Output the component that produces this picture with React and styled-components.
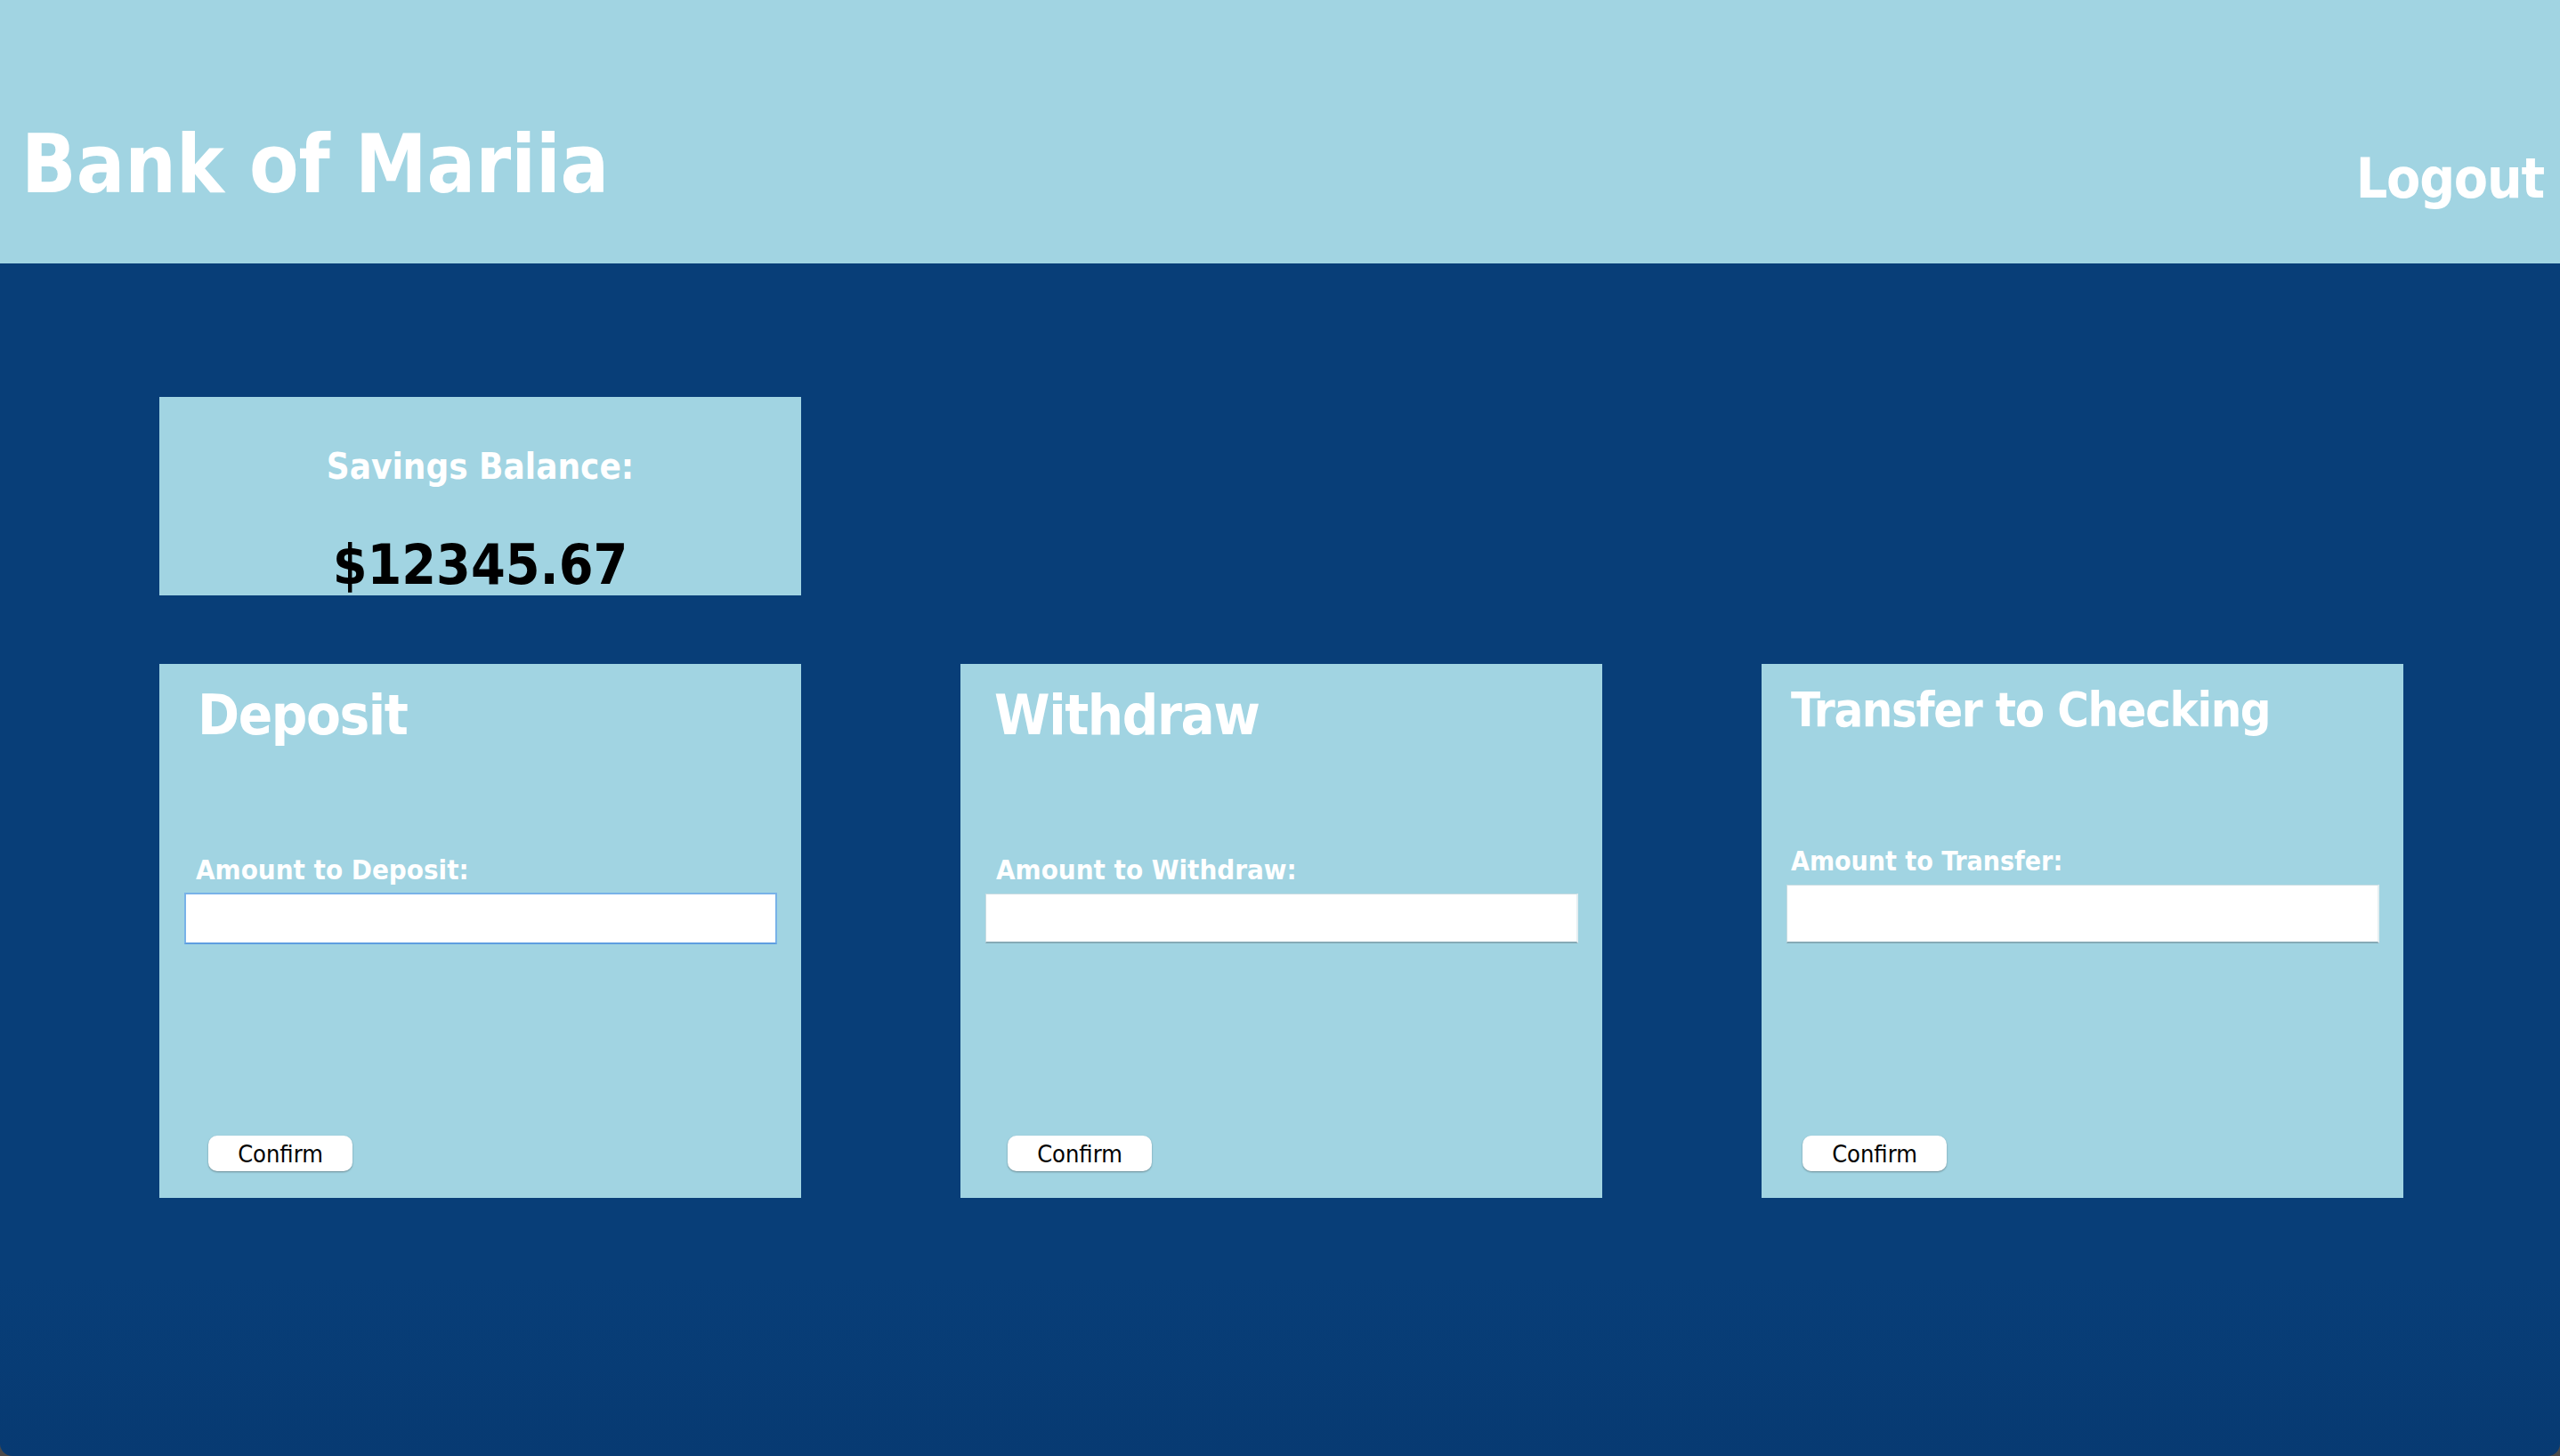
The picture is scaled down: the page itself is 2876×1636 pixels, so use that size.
import React from "react";
import styled, { createGlobalStyle } from "styled-components";

const GlobalStyle = createGlobalStyle`
  html, body {
    margin: 0;
    padding: 0;
    height: 100%;
    background: #4a4a4a;
  }
  #root {
    height: 100%;
  }
`;

const FONT = `"DejaVu Sans Condensed", "Liberation Sans", "DejaVu Sans", sans-serif`;

// the three action cards, each one drawn a little differently in the mockup
const cards = [
  {
    title: "Deposit",
    label: "Amount to Deposit:",
    titleSize: 63,
    titleLeft: 43,
    titleTop: 26,
    labelSize: 31,
    labelLeft: 41,
    labelGap: 127,
    inputGap: 10,
    inputH: 58,
    btnLeft: 55,
    focused: true,
  },
  {
    title: "Withdraw",
    label: "Amount to Withdraw:",
    titleSize: 63,
    titleLeft: 38,
    titleTop: 26,
    labelSize: 31,
    labelLeft: 40,
    labelGap: 127,
    inputGap: 11,
    inputH: 56,
    btnLeft: 53,
  },
  {
    title: "Transfer to Checking",
    label: "Amount to Transfer:",
    titleSize: 54,
    titleLeft: 33,
    titleTop: 25,
    labelSize: 30,
    labelLeft: 33,
    labelGap: 128,
    inputGap: 11,
    inputH: 66,
    btnLeft: 46,
  },
];

function App() {
  return (
    <>
      <GlobalStyle />
      <Page>
        <Header>
          <Brand>Bank of Mariia</Brand>
          <Logout>Logout</Logout>
        </Header>
        <Main>
          <BalanceCard>
            <BalanceLabel>Savings Balance:</BalanceLabel>
            <BalanceAmount>$12345.67</BalanceAmount>
          </BalanceCard>
          <CardRow>
            {cards.map((c) => (
              <ActionCard key={c.title} $top={c.titleTop}>
                <CardTitle $size={c.titleSize} $left={c.titleLeft}>
                  {c.title}
                </CardTitle>
                <AmountLabel
                  $size={c.labelSize}
                  $left={c.labelLeft}
                  $gap={c.labelGap}
                >
                  {c.label}
                </AmountLabel>
                <AmountInput
                  type="text"
                  $h={c.inputH}
                  $gap={c.inputGap}
                  $focused={c.focused}
                />
                <ConfirmButton $left={c.btnLeft}>Confirm</ConfirmButton>
              </ActionCard>
            ))}
          </CardRow>
        </Main>
      </Page>
    </>
  );
}

const Page = styled.div`
  display: flex;
  flex-direction: column;
  height: 100vh;
  width: 100vw;
  font-family: ${FONT};
`;

const Header = styled.div`
  display: flex;
  justify-content: space-between;
  align-items: flex-start;
  height: 296px;
  flex-shrink: 0;
  padding: 0 18px 0 24px;
  box-sizing: border-box;
  background-color: #a1d4e2;
`;

const Brand = styled.h1`
  margin: 140px 0 0 0;
  font-size: 90px;
  line-height: 1;
  font-weight: 700;
  color: #ffffff;
`;

const Logout = styled.span`
  margin-top: 170px;
  font-size: 62px;
  line-height: 1;
  letter-spacing: -1.2px;
  font-weight: 700;
  color: #ffffff;
  cursor: pointer;
`;

const Main = styled.div`
  flex: 1;
  display: flex;
  flex-direction: column;
  padding: 150px 0 0 179px;
  background: linear-gradient(to bottom, #083e78 0%, #083e78 85%, #073a72 100%);
  border-bottom-left-radius: 14px;
  border-bottom-right-radius: 14px;
`;

const BalanceCard = styled.div`
  display: flex;
  flex-direction: column;
  align-items: center;
  gap: 60px;
  width: 721px;
  height: 223px;
  padding-top: 58px;
  box-sizing: border-box;
  background-color: #a1d4e2;
`;

const BalanceLabel = styled.div`
  font-size: 40px;
  line-height: 1;
  font-weight: 700;
  color: #ffffff;
`;

const BalanceAmount = styled.div`
  font-size: 62px;
  line-height: 1;
  font-weight: 700;
  color: #000000;
`;

const CardRow = styled.div`
  display: flex;
  gap: 179px;
  margin-top: 77px;
`;

const ActionCard = styled.div`
  display: flex;
  flex-direction: column;
  width: 721px;
  height: 600px;
  padding: ${(p) => p.$top}px 27px 30px 28px;
  box-sizing: border-box;
  background-color: #a1d4e2;
`;

const CardTitle = styled.h2`
  margin: 0 0 0 ${(p) => p.$left - 28}px;
  font-size: ${(p) => p.$size}px;
  line-height: 1;
  letter-spacing: -1.4px;
  font-weight: 700;
  color: #ffffff;
  white-space: nowrap;
`;

const AmountLabel = styled.label`
  margin: ${(p) => p.$gap}px 0 0 ${(p) => p.$left - 28}px;
  font-size: ${(p) => p.$size}px;
  line-height: 1;
  font-weight: 700;
  color: #ffffff;
`;

const AmountInput = styled.input`
  margin-top: ${(p) => p.$gap}px;
  width: 666px;
  height: ${(p) => p.$h}px;
  box-sizing: border-box;
  background: #ffffff;
  outline: none;
  font-family: ${FONT};
  font-size: 28px;
  border: ${(p) => (p.$focused ? "2px solid #78b2e8" : "1px solid #c8dce2")};
  border-bottom: ${(p) =>
    p.$focused ? "2px solid #5e9ee0" : "2px solid #86aab6"};
  border-right: ${(p) =>
    p.$focused ? "2px solid #78b2e8" : "2px solid #e4eef1"};
`;

const ConfirmButton = styled.button`
  margin: auto 0 0 ${(p) => p.$left - 28}px;
  width: 162px;
  height: 40px;
  padding: 0;
  border: none;
  border-radius: 10px;
  background: #ffffff;
  box-shadow: 0 1px 2px rgba(0, 0, 0, 0.35);
  font-family: ${FONT};
  font-size: 27px;
  font-weight: 400;
  color: #000000;
  cursor: pointer;
`;

export default App;
